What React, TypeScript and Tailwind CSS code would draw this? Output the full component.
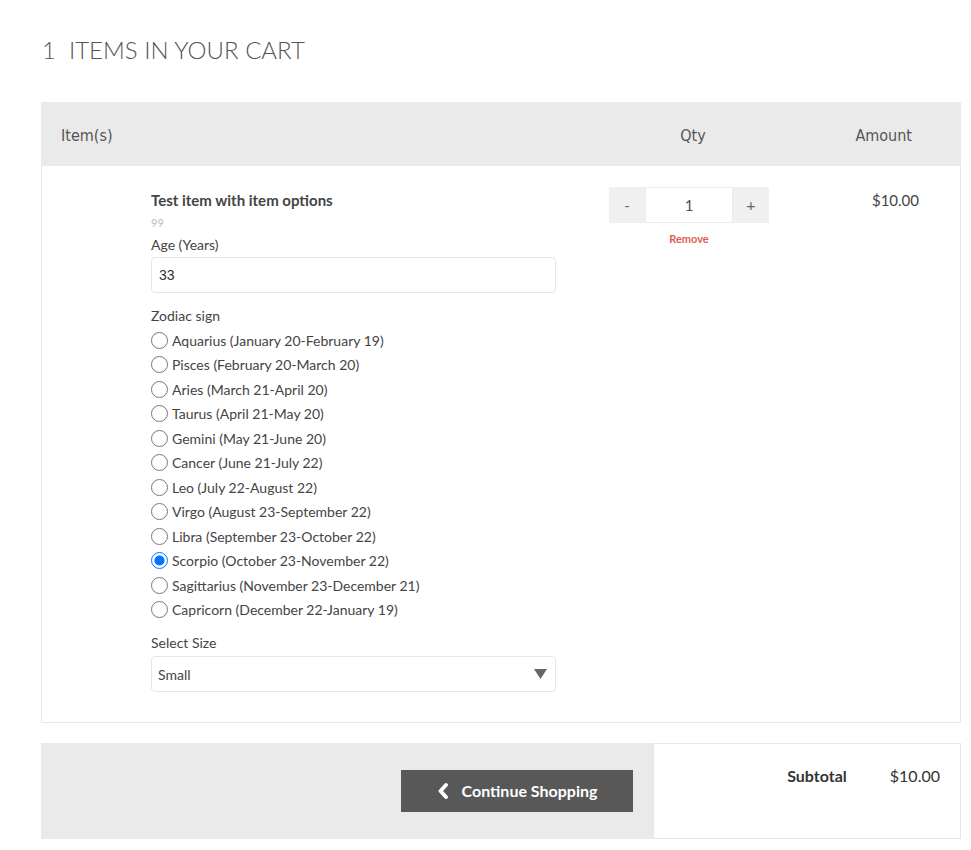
import React, { useState } from "react";

const SIGNS = [
  "Aquarius (January 20-February 19)",
  "Pisces (February 20-March 20)",
  "Aries (March 21-April 20)",
  "Taurus (April 21-May 20)",
  "Gemini (May 21-June 20)",
  "Cancer (June 21-July 22)",
  "Leo (July 22-August 22)",
  "Virgo (August 23-September 22)",
  "Libra (September 23-October 22)",
  "Scorpio (October 23-November 22)",
  "Sagittarius (November 23-December 21)",
  "Capricorn (December 22-January 19)",
];

export default function App() {
  const [sign, setSign] = useState(9);
  const [qty, setQty] = useState(1);

  return (
    <div className="min-h-screen bg-white font-['Lato','Liberation_Sans',sans-serif] text-[#555]">
      <div className="pl-[41px] pr-[10px] pt-[30px]">
        {/* Title */}
        <h1 className="text-[24px] font-light leading-[40px] text-[#555] mb-[32px] pl-[1px]">
          <span>1</span>
          <span className="ml-[13px]">ITEMS IN YOUR CART</span>
        </h1>

        {/* Table head */}
        <div className="flex items-center h-[64px] pt-[4px] bg-[#eaeaea] font-['DejaVu_Sans_Condensed','DejaVu_Sans',sans-serif] text-[16px] text-[#555]">
          <div className="w-[568px] pl-5">Item(s)</div>
          <div className="w-[160px] text-center pl-[8px]">Qty</div>
          <div className="flex-1 text-right pr-[49px]">Amount</div>
        </div>

        {/* Item row */}
        <div className="flex border-x border-b border-[#e6e6e6] pt-[21px] pb-[30px] pl-[109px]">
          <div className="w-[405px] text-[14px]">
            <div className="font-bold text-[15px] leading-[26px] text-[#444]">Test item with item options</div>
            <div className="mt-[2px] text-[11px] leading-[16px] text-[#bbb]">99</div>
            <div className="mt-[4px] leading-[20px] text-[#444]">Age (Years)</div>
            <input
              defaultValue="33"
              className="mt-[2px] block w-full h-[36px] rounded-[4px] border border-[#e6e6e6] px-[7px] text-[14px] text-[#333] font-['Liberation_Sans',Arial,sans-serif] outline-none"
            />

            <div className="mt-[13px] leading-[20px] text-[#444]">Zodiac sign</div>
            <div className="pt-[2px]">
              {SIGNS.map((s, i) => (
                <label key={s} className="flex items-center h-[24.5px] text-[#444] cursor-pointer">
                  <input
                    type="radio"
                    name="zodiac"
                    checked={sign === i}
                    onChange={() => setSign(i)}
                    className="m-0 mr-[4px] w-[17px] h-[17px] shrink-0 accent-[#0075ff]"
                  />
                  <span>{s}</span>
                </label>
              ))}
            </div>

            <div className="mt-[11px] leading-[20px] text-[#444]">Select Size</div>
            <div className="relative mt-[3px]">
              <select className="block w-full h-[36px] appearance-none rounded-[4px] border border-[#e6e6e6] bg-white px-[6px] text-[14px] text-[#444] outline-none">
                <option>Small</option>
                <option>Medium</option>
                <option>Large</option>
              </select>
              <svg className="pointer-events-none absolute right-[9px] top-[13px]" width="13" height="10" viewBox="0 0 13 10">
                <path d="M0 0h13L6.5 10z" fill="#666" />
              </svg>
            </div>
          </div>

          <div className="ml-[53px] w-[160px] flex flex-col items-center">
            <div className="flex h-[36px] w-full bg-[#f0f0f0]">
              <button onClick={() => setQty(Math.max(1, qty - 1))} className="w-[36px] text-[15px] text-[#666]">-</button>
              <div className="flex-1 bg-white border border-[#ececec] flex items-center justify-center text-[15px] text-[#4a5260]">{qty}</div>
              <button onClick={() => setQty(qty + 1)} className="w-[36px] text-[16px] text-[#666]">+</button>
            </div>
            <div className="mt-[9px] text-[11px] font-bold text-[#e0604f] leading-[14px]">Remove</div>
          </div>

          <div className="flex-1 text-right pr-[41px] text-[15px] leading-[26px] text-[#444]">$10.00</div>
        </div>

        {/* Footer */}
        <div className="mt-[20px] flex h-[96px]">
          <div className="w-[612px] bg-[#eaeaea] flex items-center justify-end pr-[20px]">
            <button className="flex items-center justify-center gap-[13px] w-[232px] h-[42px] bg-[#585858] text-white font-bold text-[16px]">
              <svg width="12" height="16" viewBox="0 0 12 16">
                <path d="M9 2L3.5 8 9 14" fill="none" stroke="#fff" strokeWidth="3.8" strokeLinecap="round" strokeLinejoin="round" />
              </svg>
              Continue Shopping
            </button>
          </div>
          <div className="flex-1 border border-[#e6e6e6] flex justify-end items-start pt-[20px] pr-[20px] text-[16px] text-[#333]">
            <span className="font-bold">Subtotal</span>
            <span className="ml-[43px]">$10.00</span>
          </div>
        </div>
      </div>
    </div>
  );
}
